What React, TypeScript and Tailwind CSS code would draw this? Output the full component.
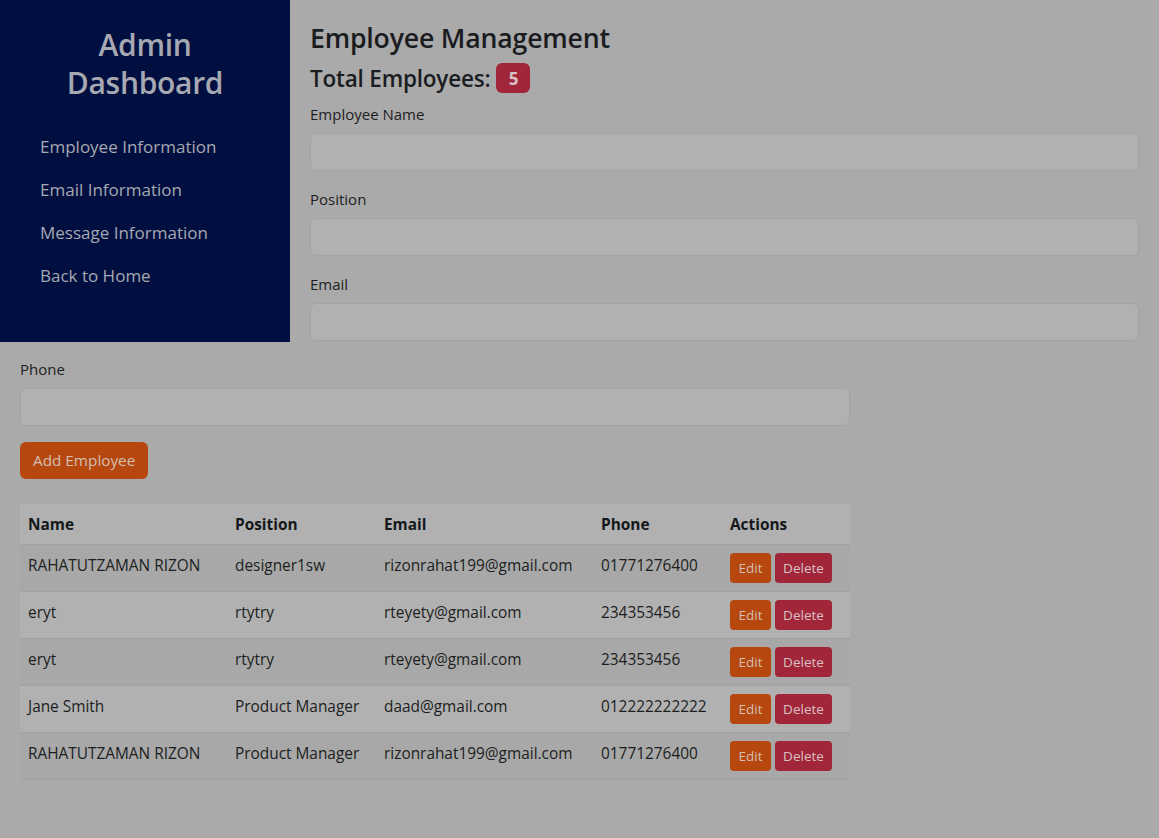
import React from "react";

const rows = [
  ["RAHATUTZAMAN RIZON", "designer1sw", "rizonrahat199@gmail.com", "01771276400"],
  ["eryt", "rtytry", "rteyety@gmail.com", "234353456"],
  ["eryt", "rtytry", "rteyety@gmail.com", "234353456"],
  ["Jane Smith", "Product Manager", "daad@gmail.com", "012222222222"],
  ["RAHATUTZAMAN RIZON", "Product Manager", "rizonrahat199@gmail.com", "01771276400"],
];

function Field({ label, last }: { label: string; last?: boolean }) {
  return (
    <div className={last ? "" : "mb-[16px]"}>
      <div className="text-[15px] leading-[24px] mb-[7px] text-[#1c1e21]">{label}</div>
      <div className="h-[38px] rounded-[6px] border border-[#a3a3a3] bg-[#b1b1b1]" />
    </div>
  );
}

export default function App() {
  return (
    <div
      className="min-h-[838px] w-[1159px] bg-[#aaaaaa] text-[#1c1e21]"
      style={{ fontFamily: '"Open Sans", "Noto Sans", sans-serif' }}
    >
      <div className="flex items-start">
        <div className="w-[290px] h-[342px] shrink-0 bg-[#000f40] px-[20px] pt-[26px]">
          <div className="text-center text-[30px] leading-[38px] font-semibold text-[#a6a8b2] tracking-[-0.3px]">
            Admin
            <br />
            Dashboard
          </div>
          <div className="mt-[33px] pl-[20px] flex flex-col gap-[19px]">
            {["Employee Information", "Email Information", "Message Information", "Back to Home"].map((t) => (
              <div key={t} className="text-[17px] leading-[24px] text-[#a6a8b2]">
                {t}
              </div>
            ))}
          </div>
        </div>
        <div className="flex-1 pl-[20px] pr-[20px] pt-[19px]">
          <div className="text-[26.7px] leading-[38px] font-semibold text-[#1a1c1f] tracking-[-0.2px] mb-[6px]">
            Employee Management
          </div>
          <div className="flex items-center text-[22.5px] leading-[29px] font-semibold text-[#1a1c1f] mb-[9px] tracking-[-0.2px]">
            Total Employees:
            <span className="ml-[6px] inline-flex items-center justify-center w-[34px] h-[30px] rounded-[6px] bg-[#a2263a] text-[17px] font-bold text-[#d8c0c4]">
              5
            </span>
          </div>
          <Field label="Employee Name" />
          <Field label="Position" />
          <Field label="Email" last />
        </div>
      </div>
      <div className="w-[870px] px-[20px] pt-[15px]">
        <Field label="Phone" />
        <div className="inline-flex items-center h-[37px] px-[13px] rounded-[6px] bg-[#b5470f] text-[15.3px] text-[#d3beb2]">
          Add Employee
        </div>
        <div className="mt-[25px] text-[15.4px]">
          <div className="flex h-[41px] items-center pt-[1px] bg-[#b1b1b1] border-b border-[#a0a0a0] font-bold text-[#15171a]">
            <div className="w-[207px] pl-[8px]">Name</div>
            <div className="w-[149px] pl-[8px]">Position</div>
            <div className="w-[217px] pl-[8px]">Email</div>
            <div className="w-[129px] pl-[8px]">Phone</div>
            <div className="flex-1 pl-[8px]">Actions</div>
          </div>
          {rows.map((r, i) => (
            <div
              key={i}
              className={`flex h-[47px] items-start pt-[8px] leading-[24px] border-b border-[#a0a0a0] text-[#1c1e21] ${
                i % 2 === 0 ? "bg-[#a8a8a8]" : "bg-[#b1b1b1]"
              }`}
            >
              <div className="w-[207px] pl-[8px] pt-[1px]">{r[0]}</div>
              <div className="w-[149px] pl-[8px] pt-[1px]">{r[1]}</div>
              <div className="w-[217px] pl-[8px] pt-[1px]">{r[2]}</div>
              <div className="w-[129px] pl-[8px] pt-[1px]">{r[3]}</div>
              <div className="flex-1 pl-[8px] flex gap-[4px]">
                <span className="inline-flex items-center justify-center w-[41px] h-[30px] rounded-[4px] bg-[#b5470f] text-[13.5px] text-[#d3beb2]">
                  Edit
                </span>
                <span className="inline-flex items-center justify-center w-[57px] h-[30px] rounded-[4px] bg-[#a2263a] text-[13.5px] text-[#d8c0c4]">
                  Delete
                </span>
              </div>
            </div>
          ))}
        </div>
      </div>
    </div>
  );
}
